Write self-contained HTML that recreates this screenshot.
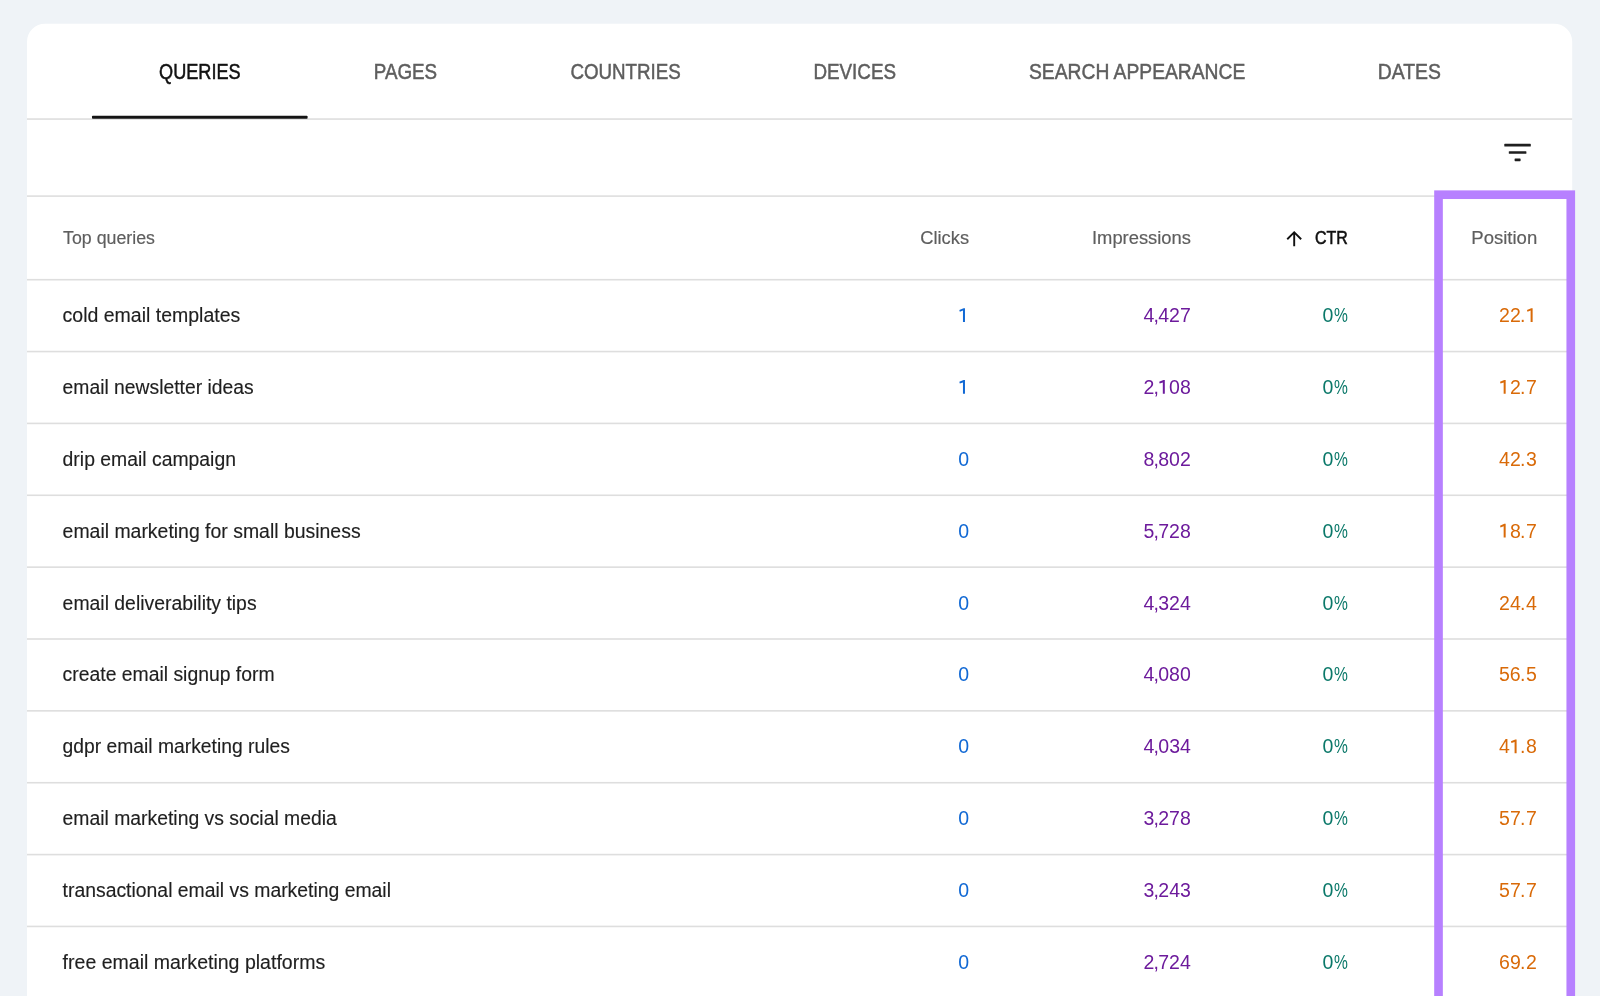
<!DOCTYPE html>
<html><head><meta charset="utf-8"><title>Search results</title>
<style>
html,body{margin:0;padding:0;background:#eff3f7;overflow:hidden}
body{width:1600px;height:996px;position:relative;font-family:"Liberation Sans",sans-serif}
svg{position:absolute;left:0;top:0;display:block;will-change:transform}
text{font-family:"Liberation Sans",sans-serif}
</style></head><body>
<svg width="1600" height="996" viewBox="0 0 1600 996">
<path d="M27 1000V41.7a18 18 0 0 1 18-18H1554.2a18 18 0 0 1 18 18V1000z" fill="#ffffff"/>
<rect x="27.00" y="118.25" width="1545.20" height="1.60" fill="#dedede"/>
<rect x="27.00" y="195.30" width="1545.20" height="1.60" fill="#dedede"/>
<rect x="27.00" y="278.90" width="1543.00" height="1.60" fill="#dedede"/>
<rect x="27.00" y="350.76" width="1543.00" height="1.60" fill="#dedede"/>
<rect x="27.00" y="422.62" width="1543.00" height="1.60" fill="#dedede"/>
<rect x="27.00" y="494.48" width="1543.00" height="1.60" fill="#dedede"/>
<rect x="27.00" y="566.34" width="1543.00" height="1.60" fill="#dedede"/>
<rect x="27.00" y="638.20" width="1543.00" height="1.60" fill="#dedede"/>
<rect x="27.00" y="710.06" width="1543.00" height="1.60" fill="#dedede"/>
<rect x="27.00" y="781.92" width="1543.00" height="1.60" fill="#dedede"/>
<rect x="27.00" y="853.78" width="1543.00" height="1.60" fill="#dedede"/>
<rect x="27.00" y="925.64" width="1543.00" height="1.60" fill="#dedede"/>
<rect x="92" y="115.8" width="215.6" height="2.9" rx="0.8" fill="#141414"/>
<rect x="1504.30" y="143.85" width="26.50" height="2.7" rx="0.6" fill="#1f1f1f"/>
<rect x="1508.80" y="151.15" width="17.60" height="2.7" rx="0.6" fill="#1f1f1f"/>
<rect x="1514.60" y="158.45" width="6.00" height="2.7" rx="0.6" fill="#1f1f1f"/>
<g transform="translate(1294.2 230.9) scale(0.955) translate(-12 -4)"><path d="M4 12l1.41 1.41L11 7.83V20h2V7.83l5.58 5.59L20 12l-8-8-8 8z" fill="#111111"/></g>
<rect x="1438.52" y="194.7" width="132.25" height="820" fill="none" stroke="#b780ff" stroke-width="8.65"/>
<text x="159.05" y="78.85" font-size="21.80" fill="#111111" textLength="81.65" lengthAdjust="spacingAndGlyphs" stroke="#111111" stroke-width="0.50">QUERIES</text>
<text x="373.80" y="78.85" font-size="21.80" fill="#5e5e5e" textLength="63.35" lengthAdjust="spacingAndGlyphs" stroke="#5e5e5e" stroke-width="0.50">PAGES</text>
<text x="570.40" y="78.85" font-size="21.80" fill="#5e5e5e" textLength="110.40" lengthAdjust="spacingAndGlyphs" stroke="#5e5e5e" stroke-width="0.50">COUNTRIES</text>
<text x="813.40" y="78.85" font-size="21.80" fill="#5e5e5e" textLength="82.70" lengthAdjust="spacingAndGlyphs" stroke="#5e5e5e" stroke-width="0.50">DEVICES</text>
<text x="1029.00" y="78.85" font-size="21.80" fill="#5e5e5e" textLength="216.30" lengthAdjust="spacingAndGlyphs" stroke="#5e5e5e" stroke-width="0.50">SEARCH APPEARANCE</text>
<text x="1377.70" y="78.85" font-size="21.80" fill="#5e5e5e" textLength="63.20" lengthAdjust="spacingAndGlyphs" stroke="#5e5e5e" stroke-width="0.50">DATES</text>
<text x="63.10" y="243.60" font-size="18.00" fill="#5e5e5e" textLength="91.80" lengthAdjust="spacingAndGlyphs" stroke="#5e5e5e" stroke-width="0.18">Top queries</text>
<text x="920.30" y="243.60" font-size="18.00" fill="#5e5e5e" textLength="48.75" lengthAdjust="spacingAndGlyphs" stroke="#5e5e5e" stroke-width="0.18">Clicks</text>
<text x="1092.00" y="243.60" font-size="18.00" fill="#5e5e5e" textLength="98.90" lengthAdjust="spacingAndGlyphs" stroke="#5e5e5e" stroke-width="0.18">Impressions</text>
<text x="1314.90" y="243.60" font-size="18.00" fill="#111111" textLength="32.80" lengthAdjust="spacingAndGlyphs" stroke="#111111" stroke-width="0.55">CTR</text>
<text x="1471.30" y="243.60" font-size="18.00" fill="#5e5e5e" textLength="65.90" lengthAdjust="spacingAndGlyphs" stroke="#5e5e5e" stroke-width="0.18">Position</text>
<text x="62.60" y="321.90" font-size="19.50" fill="#1f1f1f" textLength="177.70" lengthAdjust="spacingAndGlyphs" stroke="#1f1f1f" stroke-width="0.15">cold email templates</text>
<path d="M964.97 321.90v-13.75h-1.35l-4.3 1.8 .5 1.75 3.15-1.2v11.4z" fill="#1068d4"/>
<text x="1143.48 1153.50 1158.21 1169.08 1180.00" y="321.90" font-size="19.50" fill="#6d1b9c">4,427</text>
<text x="1334.03" y="321.90" font-size="19.50" fill="#0a7869" textLength="13.87" lengthAdjust="spacingAndGlyphs">%</text>
<text x="1322.51" y="321.90" font-size="19.50" fill="#0a7869">0</text>
<path d="M1532.62 321.90v-13.75h-1.35l-4.3 1.8 .5 1.75 3.15-1.2v11.4z" fill="#d96a08"/>
<text x="1499.00 1509.93 1520.06" y="321.90" font-size="19.50" fill="#d96a08">22.</text>
<text x="62.60" y="393.80" font-size="19.50" fill="#1f1f1f" textLength="191.10" lengthAdjust="spacingAndGlyphs" stroke="#1f1f1f" stroke-width="0.15">email newsletter ideas</text>
<path d="M964.97 393.80v-13.75h-1.35l-4.3 1.8 .5 1.75 3.15-1.2v11.4z" fill="#1068d4"/>
<path d="M1164.81 393.80v-13.75h-1.35l-4.3 1.8 .5 1.75 3.15-1.2v11.4z" fill="#6d1b9c"/>
<text x="1143.42 1153.50 1169.08 1180.01" y="393.80" font-size="19.50" fill="#6d1b9c">2,08</text>
<text x="1334.03" y="393.80" font-size="19.50" fill="#0a7869" textLength="13.87" lengthAdjust="spacingAndGlyphs">%</text>
<text x="1322.51" y="393.80" font-size="19.50" fill="#0a7869">0</text>
<path d="M1505.66 393.80v-13.75h-1.35l-4.3 1.8 .5 1.75 3.15-1.2v11.4z" fill="#d96a08"/>
<text x="1509.93 1520.06 1525.95" y="393.80" font-size="19.50" fill="#d96a08">2.7</text>
<text x="62.60" y="465.70" font-size="19.50" fill="#1f1f1f" textLength="173.40" lengthAdjust="spacingAndGlyphs" stroke="#1f1f1f" stroke-width="0.15">drip email campaign</text>
<text x="958.31" y="465.70" font-size="19.50" fill="#1068d4">0</text>
<text x="1143.42 1153.50 1158.15 1169.08 1180.01" y="465.70" font-size="19.50" fill="#6d1b9c">8,802</text>
<text x="1334.03" y="465.70" font-size="19.50" fill="#0a7869" textLength="13.87" lengthAdjust="spacingAndGlyphs">%</text>
<text x="1322.51" y="465.70" font-size="19.50" fill="#0a7869">0</text>
<text x="1499.06 1509.93 1520.06 1526.02" y="465.70" font-size="19.50" fill="#d96a08">42.3</text>
<text x="62.60" y="537.60" font-size="19.50" fill="#1f1f1f" textLength="298.00" lengthAdjust="spacingAndGlyphs" stroke="#1f1f1f" stroke-width="0.15">email marketing for small business</text>
<text x="958.31" y="537.60" font-size="19.50" fill="#1068d4">0</text>
<text x="1143.44 1153.50 1158.14 1169.08 1180.01" y="537.60" font-size="19.50" fill="#6d1b9c">5,728</text>
<text x="1334.03" y="537.60" font-size="19.50" fill="#0a7869" textLength="13.87" lengthAdjust="spacingAndGlyphs">%</text>
<text x="1322.51" y="537.60" font-size="19.50" fill="#0a7869">0</text>
<path d="M1505.66 537.60v-13.75h-1.35l-4.3 1.8 .5 1.75 3.15-1.2v11.4z" fill="#d96a08"/>
<text x="1509.93 1520.06 1525.95" y="537.60" font-size="19.50" fill="#d96a08">8.7</text>
<text x="62.60" y="609.50" font-size="19.50" fill="#1f1f1f" textLength="194.00" lengthAdjust="spacingAndGlyphs" stroke="#1f1f1f" stroke-width="0.15">email deliverability tips</text>
<text x="958.31" y="609.50" font-size="19.50" fill="#1068d4">0</text>
<text x="1143.48 1153.50 1158.21 1169.08 1180.07" y="609.50" font-size="19.50" fill="#6d1b9c">4,324</text>
<text x="1334.03" y="609.50" font-size="19.50" fill="#0a7869" textLength="13.87" lengthAdjust="spacingAndGlyphs">%</text>
<text x="1322.51" y="609.50" font-size="19.50" fill="#0a7869">0</text>
<text x="1499.00 1509.99 1520.06 1526.02" y="609.50" font-size="19.50" fill="#d96a08">24.4</text>
<text x="62.60" y="681.40" font-size="19.50" fill="#1f1f1f" textLength="212.00" lengthAdjust="spacingAndGlyphs" stroke="#1f1f1f" stroke-width="0.15">create email signup form</text>
<text x="958.31" y="681.40" font-size="19.50" fill="#1068d4">0</text>
<text x="1143.48 1153.50 1158.15 1169.08 1180.01" y="681.40" font-size="19.50" fill="#6d1b9c">4,080</text>
<text x="1334.03" y="681.40" font-size="19.50" fill="#0a7869" textLength="13.87" lengthAdjust="spacingAndGlyphs">%</text>
<text x="1322.51" y="681.40" font-size="19.50" fill="#0a7869">0</text>
<text x="1499.02 1509.87 1520.06 1525.98" y="681.40" font-size="19.50" fill="#d96a08">56.5</text>
<text x="62.60" y="753.30" font-size="19.50" fill="#1f1f1f" textLength="227.20" lengthAdjust="spacingAndGlyphs" stroke="#1f1f1f" stroke-width="0.15">gdpr email marketing rules</text>
<text x="958.31" y="753.30" font-size="19.50" fill="#1068d4">0</text>
<text x="1143.48 1153.50 1158.15 1169.14 1180.07" y="753.30" font-size="19.50" fill="#6d1b9c">4,034</text>
<text x="1334.03" y="753.30" font-size="19.50" fill="#0a7869" textLength="13.87" lengthAdjust="spacingAndGlyphs">%</text>
<text x="1322.51" y="753.30" font-size="19.50" fill="#0a7869">0</text>
<path d="M1516.59 753.30v-13.75h-1.35l-4.3 1.8 .5 1.75 3.15-1.2v11.4z" fill="#d96a08"/>
<text x="1499.06 1520.06 1525.96" y="753.30" font-size="19.50" fill="#d96a08">4.8</text>
<text x="62.60" y="825.20" font-size="19.50" fill="#1f1f1f" textLength="274.20" lengthAdjust="spacingAndGlyphs" stroke="#1f1f1f" stroke-width="0.15">email marketing vs social media</text>
<text x="958.31" y="825.20" font-size="19.50" fill="#1068d4">0</text>
<text x="1143.48 1153.50 1158.15 1169.07 1180.01" y="825.20" font-size="19.50" fill="#6d1b9c">3,278</text>
<text x="1334.03" y="825.20" font-size="19.50" fill="#0a7869" textLength="13.87" lengthAdjust="spacingAndGlyphs">%</text>
<text x="1322.51" y="825.20" font-size="19.50" fill="#0a7869">0</text>
<text x="1499.02 1509.92 1520.06 1525.95" y="825.20" font-size="19.50" fill="#d96a08">57.7</text>
<text x="62.60" y="897.10" font-size="19.50" fill="#1f1f1f" textLength="328.40" lengthAdjust="spacingAndGlyphs" stroke="#1f1f1f" stroke-width="0.15">transactional email vs marketing email</text>
<text x="958.31" y="897.10" font-size="19.50" fill="#1068d4">0</text>
<text x="1143.48 1153.50 1158.15 1169.14 1180.07" y="897.10" font-size="19.50" fill="#6d1b9c">3,243</text>
<text x="1334.03" y="897.10" font-size="19.50" fill="#0a7869" textLength="13.87" lengthAdjust="spacingAndGlyphs">%</text>
<text x="1322.51" y="897.10" font-size="19.50" fill="#0a7869">0</text>
<text x="1499.02 1509.92 1520.06 1525.95" y="897.10" font-size="19.50" fill="#d96a08">57.7</text>
<text x="62.60" y="969.00" font-size="19.50" fill="#1f1f1f" textLength="262.60" lengthAdjust="spacingAndGlyphs" stroke="#1f1f1f" stroke-width="0.15">free email marketing platforms</text>
<text x="958.31" y="969.00" font-size="19.50" fill="#1068d4">0</text>
<text x="1143.42 1153.50 1158.14 1169.08 1180.07" y="969.00" font-size="19.50" fill="#6d1b9c">2,724</text>
<text x="1334.03" y="969.00" font-size="19.50" fill="#0a7869" textLength="13.87" lengthAdjust="spacingAndGlyphs">%</text>
<text x="1322.51" y="969.00" font-size="19.50" fill="#0a7869">0</text>
<text x="1498.94 1509.93 1520.06 1525.96" y="969.00" font-size="19.50" fill="#d96a08">69.2</text>
</svg>
</body></html>
